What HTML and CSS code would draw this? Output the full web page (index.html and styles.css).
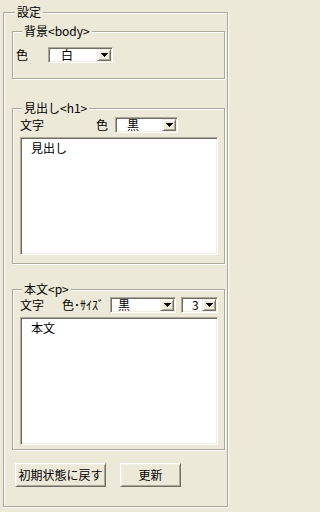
FILE: index.html
```html
<!DOCTYPE html>
<html lang="ja">
<head>
<meta charset="utf-8">
<title>設定</title>
<link rel="stylesheet" href="styles.css">
</head>
<body>
<div class="group outer">
  <div class="legend">設定</div>

  <div class="group inner g1">
    <div class="legend">背景&lt;body&gt;</div>
    <div class="row r1">
      <span class="lbl">色</span>
      <div class="combo c1">
        <span class="val">白</span>
        <span class="drop"><svg width="7" height="4" viewBox="0 0 7 4" shape-rendering="crispEdges"><rect x="0" y="0" width="7" height="1"/><rect x="1" y="1" width="5" height="1"/><rect x="2" y="2" width="3" height="1"/><rect x="3" y="3" width="1" height="1"/></svg></span>
      </div>
    </div>
  </div>

  <div class="group inner g2">
    <div class="legend">見出し&lt;h1&gt;</div>
    <div class="row r2">
      <span class="lbl w-moji">文字</span>
      <span class="lbl l-iro">色</span>
      <div class="combo c2">
        <span class="val">黒</span>
        <span class="drop"><svg width="7" height="4" viewBox="0 0 7 4" shape-rendering="crispEdges"><rect x="0" y="0" width="7" height="1"/><rect x="1" y="1" width="5" height="1"/><rect x="2" y="2" width="3" height="1"/><rect x="3" y="3" width="1" height="1"/></svg></span>
      </div>
    </div>
    <textarea class="memo m1" readonly>見出し</textarea>
  </div>

  <div class="group inner g3">
    <div class="legend">本文&lt;p&gt;</div>
    <div class="row r3">
      <span class="lbl w-moji">文字</span>
      <span class="lbl l-size">色･ｻｲｽﾞ</span>
      <div class="combo c3">
        <span class="val">黒</span>
        <span class="drop"><svg width="7" height="4" viewBox="0 0 7 4" shape-rendering="crispEdges"><rect x="0" y="0" width="7" height="1"/><rect x="1" y="1" width="5" height="1"/><rect x="2" y="2" width="3" height="1"/><rect x="3" y="3" width="1" height="1"/></svg></span>
      </div>
      <div class="combo c4">
        <span class="val">3</span>
        <span class="drop"><svg width="7" height="4" viewBox="0 0 7 4" shape-rendering="crispEdges"><rect x="0" y="0" width="7" height="1"/><rect x="1" y="1" width="5" height="1"/><rect x="2" y="2" width="3" height="1"/><rect x="3" y="3" width="1" height="1"/></svg></span>
      </div>
    </div>
    <textarea class="memo m2" readonly>本文</textarea>
  </div>

  <div class="buttons">
    <button class="btn b1" type="button">初期状態に戻す</button>
    <button class="btn b2" type="button">更新</button>
  </div>
</div>
</body>
</html>
```

FILE: styles.css
```css
* { box-sizing: border-box; }

html, body {
  margin: 0;
  padding: 0;
}

body {
  width: 237px;
  height: 512px;
  overflow: hidden;
  background: #ece9d8;
  color: #000;
  font-family: "Noto Sans CJK JP", "Noto Sans", sans-serif;
  font-size: 12px;
  line-height: 12px;
}

/* etched group box */
.group {
  border: 1px solid #aca899;
  box-shadow: inset 1px 1px 0 #fff, 1px 1px 0 #fff;
}

.legend {
  display: table;
  height: 12px;
  line-height: 12px;
  margin-top: -7px;
  padding: 0 2px;
  background: #ece9d8;
  white-space: nowrap;
}

.outer {
  width: 225px;
  height: 495px;
  margin: 12px 0 0 3px;
  padding: 0 2px 0 8px;
}

.outer > .legend { margin-left: 3px; }

.inner { width: 213px; }
.inner > .legend { margin-left: 9px; }

.g1 { margin-top: 13px; height: 48px; }
.g2 { margin-top: 29px; height: 156px; }
.g3 { margin-top: 25px; height: 161px; }

/* rows */
.row {
  display: flex;
  align-items: center;
  height: 16px;
}

.r1 { margin-top: 10px; padding-left: 3px; }
.r2 { margin-top: 3px; padding-left: 7px; }
.r3 { margin-top: 2px; padding-left: 7px; }

.lbl { white-space: nowrap; line-height: 12px; }
.w-moji { width: 24px; }
.l-iro { margin-left: 52px; width: 12px; }
.l-size { margin-left: 18px; width: 48px; }

/* combo box */
.combo {
  display: flex;
  align-items: stretch;
  height: 16px;
  padding: 1px;
  background: #fff;
  border: 1px solid;
  border-color: #aca899 #fff #fff #aca899;
  box-shadow: inset 1px 1px 0 #716f64, inset -1px -1px 0 #f1efe2;
}

.combo .val {
  flex: 1;
  line-height: 12px;
  white-space: nowrap;
}

.drop {
  width: 14px;
  display: flex;
  align-items: center;
  justify-content: center;
  background: #ece9d8;
  border: 1px solid;
  border-color: #f1efe2 #716f64 #716f64 #f1efe2;
  box-shadow: inset 1px 1px 0 #fff, inset -1px -1px 0 #aca899;
}

.drop svg { display: block; fill: #000; }

.c1 { width: 65px; margin-left: 20px; }
.c1 .val { padding-left: 11px; }
.c2 { width: 63px; margin-left: 7px; }
.c2 .val { padding-left: 10px; }
.c3 { width: 66px; }
.c3 .val { padding-left: 6px; }
.c4 { width: 37px; margin-left: 5px; }
.c4 .val { padding-left: 9px; }

/* memo boxes */
.memo {
  display: block;
  width: 198px;
  margin: 4px 0 0 7px;
  padding: 4px 10px;
  background: #fff;
  border: 1px solid;
  border-color: #aca899 #fff #fff #aca899;
  box-shadow: inset 1px 1px 0 #716f64, inset -1px -1px 0 #f1efe2;
  font: inherit;
  line-height: 12px;
  color: #000;
  resize: none;
  outline: none;
  overflow: hidden;
}

.m1 { height: 118px; }
.m2 { height: 128px; }

/* buttons */
.buttons {
  display: flex;
  margin: 13px 0 0 3px;
}

.btn {
  height: 24px;
  padding: 0;
  background: #ece9d8;
  color: #000;
  font: inherit;
  line-height: 12px;
  border: 1px solid;
  border-color: #fff #716f64 #716f64 #fff;
  box-shadow: inset 1px 1px 0 #f1efe2, inset -1px -1px 0 #aca899;
  white-space: nowrap;
}

.b1 { width: 91px; }
.b2 { width: 61px; margin-left: 14px; }
```
